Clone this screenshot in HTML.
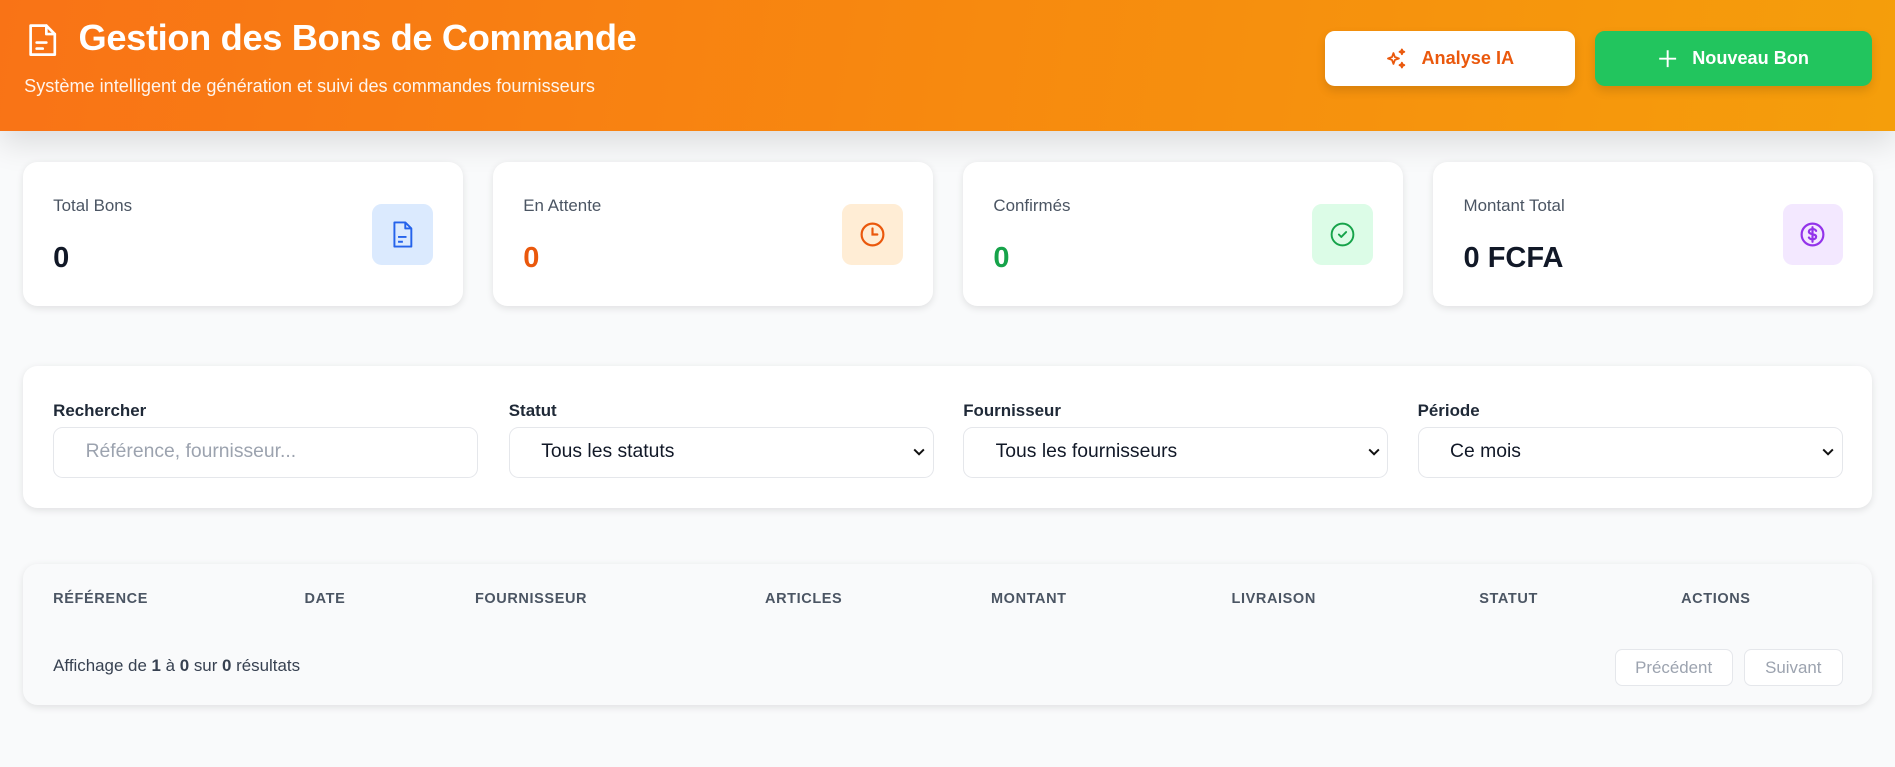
<!DOCTYPE html>
<html><head><meta charset="utf-8">
<style>
html,body{margin:0;padding:0;background:#f9fafb;overflow:hidden}
body{width:1895px;height:767px}
#w{zoom:1.20855;width:1568px;height:635px;position:relative;font-family:"Liberation Sans",sans-serif;color:#111827}
.hdr{position:absolute;left:0;top:0;width:1568px;height:108px;background:linear-gradient(100deg,#f97316 0%,#f7890f 50%,#f59e0b 100%);box-shadow:0 10px 25px rgba(0,0,0,.12)}
.hdr h1{position:absolute;left:65px;top:14px;margin:0;font-size:30px;font-weight:bold;color:#fff;letter-spacing:-.3px}
.hdr p{position:absolute;left:20px;top:63px;margin:0;font-size:15px;color:rgba(255,255,255,.92)}
.btn{position:absolute;top:26px;height:45px;border-radius:8px;display:flex;align-items:center;justify-content:center;font-size:15px;font-weight:bold;box-shadow:0 4px 8px rgba(0,0,0,.12)}
.card{position:absolute;top:134px;width:364px;height:119px;background:#fff;border-radius:12px;box-shadow:0 2px 6px rgba(0,0,0,.1)}
.card .l{position:absolute;left:25px;top:28px;font-size:14px;color:#4b5563}
.card .v{position:absolute;left:25px;top:66px;font-size:24px;font-weight:bold}
.card .i{position:absolute;left:289px;top:35px;width:50px;height:50px;border-radius:8px;display:flex;align-items:center;justify-content:center}
.panel{position:absolute;left:19px;width:1530px;border-radius:12px;box-shadow:0 2px 6px rgba(0,0,0,.1)}
.lab{position:absolute;top:29px;font-size:14px;font-weight:bold;color:#1f2937}
.inp{position:absolute;top:50px;width:350px;height:41px;border:1px solid #e5e7eb;border-radius:8px;background:#fff;font-size:16px;display:flex;align-items:center;box-sizing:content-box}
.inp span{margin-left:26px}
.inp svg{position:absolute;right:6px;top:16px}
.th{position:absolute;top:22px;font-size:12px;font-weight:bold;color:#4b5563;letter-spacing:.5px}
.pb{position:absolute;top:70px;height:29px;border:1px solid #e5e7eb;border-radius:6px;background:#fff;color:#9ca3af;font-size:14px;display:flex;align-items:center;justify-content:center}
</style></head><body><div id="w">
<div class="hdr">
<svg style="position:absolute;left:22px;top:18px" width="26" height="30" viewBox="0 0 26 30" fill="none" stroke="#fff" stroke-width="2.2" stroke-linejoin="round" stroke-linecap="round"><path d="M3 3h13l7 7v17H3z"/><path d="M16 3v7h7"/><path d="M8 17h8M8 22h5"/></svg>
<h1>Gestion des Bons de Commande</h1>
<p>Système intelligent de génération et suivi des commandes fournisseurs</p>
<div class="btn" style="left:1096px;width:207px;background:#fff;color:#ea580c"><svg width="20" height="20" viewBox="0 0 20 20" fill="none" stroke="#ea580c" stroke-width="1.5" stroke-linejoin="round" style="margin-right:10px"><path d="M7 5l1.2 3.3L11.5 9.5 8.2 10.7 7 14 5.8 10.7 2.5 9.5 5.8 8.3z"/><path d="M14 2l.6 1.4L16 4l-1.4.6L14 6l-.6-1.4L12 4l1.4-.6z"/><path d="M14 13l.6 1.4 1.4.6-1.4.6L14 17l-.6-1.4L12 15l1.4-.6z"/></svg>Analyse IA</div>
<div class="btn" style="left:1320px;width:229px;background:#22c55e;color:#fff"><svg width="16" height="16" viewBox="0 0 16 16" stroke="#fff" stroke-width="1.6" style="margin-right:12px"><path d="M8 1v14M1 8h14"/></svg>Nouveau Bon</div>
</div>

<div class="card" style="left:19px"><div class="l">Total Bons</div><div class="v">0</div><div class="i" style="background:#dbeafe"><svg width="18" height="24" viewBox="0 0 18 24" fill="none" stroke="#2563eb" stroke-width="1.6" stroke-linejoin="round"><path d="M2 2h9l5 5v15H2z"/><path d="M11 2v5h5"/><path d="M5 14h7M5 18h4"/></svg></div></div>
<div class="card" style="left:408px"><div class="l">En Attente</div><div class="v" style="color:#ea580c">0</div><div class="i" style="background:#ffedd5"><svg width="24" height="24" viewBox="0 0 24 24" fill="none" stroke="#ea580c" stroke-width="1.8" stroke-linecap="round"><circle cx="12" cy="12" r="9"/><path d="M12 7v5h4"/></svg></div></div>
<div class="card" style="left:797px"><div class="l">Confirmés</div><div class="v" style="color:#16a34a">0</div><div class="i" style="background:#dcfce7"><svg width="24" height="24" viewBox="0 0 24 24" fill="none" stroke="#16a34a" stroke-width="1.6" stroke-linecap="round" stroke-linejoin="round"><circle cx="12" cy="12" r="9"/><path d="M9 12l2 2 4-4"/></svg></div></div>
<div class="card" style="left:1186px"><div class="l">Montant Total</div><div class="v">0 FCFA</div><div class="i" style="background:#f3e8ff"><svg width="24" height="24" viewBox="0 0 24 24" fill="none" stroke="#9333ea" stroke-width="1.8" stroke-linecap="round"><circle cx="12" cy="12" r="9"/><path d="M15 9c-.5-1-1.6-1.5-3-1.5-1.7 0-3 .9-3 2.1 0 2.8 6 1.4 6 4.3 0 1.2-1.3 2.1-3 2.1-1.4 0-2.5-.6-3-1.5M12 6v12"/></svg></div></div>

<div class="panel" style="top:303px;height:117px;background:#fff">
<div class="lab" style="left:25px">Rechercher</div><div class="lab" style="left:402px">Statut</div><div class="lab" style="left:778px">Fournisseur</div><div class="lab" style="left:1154px">Période</div>
<div class="inp" style="left:25px;color:#9ca3af"><span>Référence, fournisseur...</span></div>
<div class="inp" style="left:402px"><span>Tous les statuts</span><svg width="10" height="8" viewBox="0 0 10 8" fill="none" stroke="#111" stroke-width="1.6"><path d="M1 2l4 4 4-4"/></svg></div>
<div class="inp" style="left:778px"><span>Tous les fournisseurs</span><svg width="10" height="8" viewBox="0 0 10 8" fill="none" stroke="#111" stroke-width="1.6"><path d="M1 2l4 4 4-4"/></svg></div>
<div class="inp" style="left:1154px"><span>Ce mois</span><svg width="10" height="8" viewBox="0 0 10 8" fill="none" stroke="#111" stroke-width="1.6"><path d="M1 2l4 4 4-4"/></svg></div>
</div>

<div class="panel" style="top:467px;height:116px;background:#f9fafb">
<div class="th" style="left:25px">RÉFÉRENCE</div><div class="th" style="left:233px">DATE</div><div class="th" style="left:374px">FOURNISSEUR</div><div class="th" style="left:614px">ARTICLES</div><div class="th" style="left:801px">MONTANT</div><div class="th" style="left:1000px">LIVRAISON</div><div class="th" style="left:1205px">STATUT</div><div class="th" style="left:1372px">ACTIONS</div>
<div style="position:absolute;left:25px;top:76px;font-size:14px;color:#374151">Affichage de <b>1</b> à <b>0</b> sur <b>0</b> résultats</div>
<div class="pb" style="left:1317px;width:96px">Précédent</div>
<div class="pb" style="left:1424px;width:80px">Suivant</div>
</div>
</div></body></html>
